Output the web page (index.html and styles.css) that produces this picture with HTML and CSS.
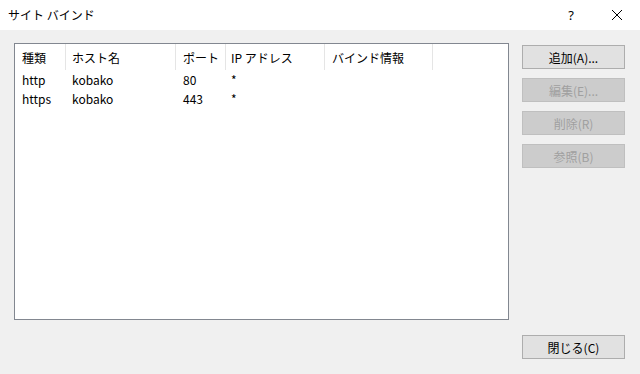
FILE: index.html
```html
<!DOCTYPE html>
<html lang="ja">
<head>
<meta charset="utf-8">
<link rel="stylesheet" href="styles.css">
</head>
<body>
<div class="window">
  <div class="titlebar">
    <span class="title">サイト バインド</span>
    <div class="title-controls">
      <span class="help">?</span>
      <span class="close-x">
        <svg width="12" height="12" viewBox="0 0 12 12"><path d="M1 1 L11 11 M11 1 L1 11" stroke="#000" stroke-width="1" fill="none"/></svg>
      </span>
    </div>
  </div>
  <div class="content">
    <div class="main">
      <div class="listview">
        <div class="row header">
          <div class="cell c1">種類</div>
          <div class="cell c2">ホスト名</div>
          <div class="cell c3">ポート</div>
          <div class="cell c4">IP アドレス</div>
          <div class="cell c5">バインド情報</div>
        </div>
        <div class="row">
          <div class="cell c1">http</div>
          <div class="cell c2">kobako</div>
          <div class="cell c3">80</div>
          <div class="cell c4">*</div>
          <div class="cell c5"></div>
        </div>
        <div class="row">
          <div class="cell c1">https</div>
          <div class="cell c2">kobako</div>
          <div class="cell c3">443</div>
          <div class="cell c4">*</div>
          <div class="cell c5"></div>
        </div>
      </div>
      <div class="buttons">
        <button class="btn">追加(A)...</button>
        <button class="btn" disabled>編集(E)...</button>
        <button class="btn" disabled>削除(R)</button>
        <button class="btn" disabled>参照(B)</button>
      </div>
    </div>
    <div class="footer">
      <button class="btn">閉じる(C)</button>
    </div>
  </div>
</div>
</body>
</html>
```
FILE: styles.css
```css
* { box-sizing: border-box; }
html, body {
  margin: 0;
  padding: 0;
  width: 640px;
  height: 374px;
  overflow: hidden;
  background: #f0f0f0;
  font-family: "Noto Sans CJK JP", "Noto Sans", sans-serif;
  font-size: 12px;
  color: #000;
}
.window { width: 640px; height: 374px; display: flex; flex-direction: column; }
.titlebar {
  height: 30px;
  background: #fff;
  display: flex;
  align-items: center;
  justify-content: space-between;
  padding-left: 8px;
}
.title { font-size: 12px; color: #000; line-height: 1; }
.title-controls { display: flex; align-items: center; height: 30px; }
.help {
  width: 46px;
  text-align: center;
  font-family: "Noto Sans", sans-serif;
  font-size: 13px;
}
.close-x {
  width: 46px;
  height: 30px;
  display: flex;
  align-items: center;
  justify-content: center;
}
.close-x svg { display: block; }
.content { padding: 13px 15px 0 14px; display: flex; flex-direction: column; }
.main { display: flex; align-items: flex-start; }
.listview {
  width: 495px;
  height: 277px;
  background: #fff;
  border: 1px solid #828790;
}
.row { display: flex; height: 19px; align-items: center; }
.row.header { height: 26px; }
.cell {
  padding-left: 7px;
  height: 100%;
  display: flex;
  align-items: center;
  white-space: nowrap;
}
.header .cell { border-right: 1px solid #e5e5e5; }
.c1 { width: 51px; }
.c2 { width: 110px; padding-left: 6px; }
.c3 { width: 50px; }
.c4 { width: 99px; padding-left: 5px; }
.c5 { width: 108px; }
.buttons {
  margin-left: 13px;
  margin-top: 2px;
  display: flex;
  flex-direction: column;
  gap: 9px;
}
.btn {
  width: 103px;
  height: 24px;
  background: #e1e1e1;
  border: 1px solid #adadad;
  font-family: "Noto Sans CJK JP", "Noto Sans", sans-serif;
  font-size: 12px;
  color: #000;
  padding: 0;
  margin: 0;
}
.btn:disabled {
  background: #cccccc;
  border-color: #bfbfbf;
  color: #a0a0a0;
}
.footer {
  display: flex;
  justify-content: flex-end;
  margin-top: 15px;
}
```
